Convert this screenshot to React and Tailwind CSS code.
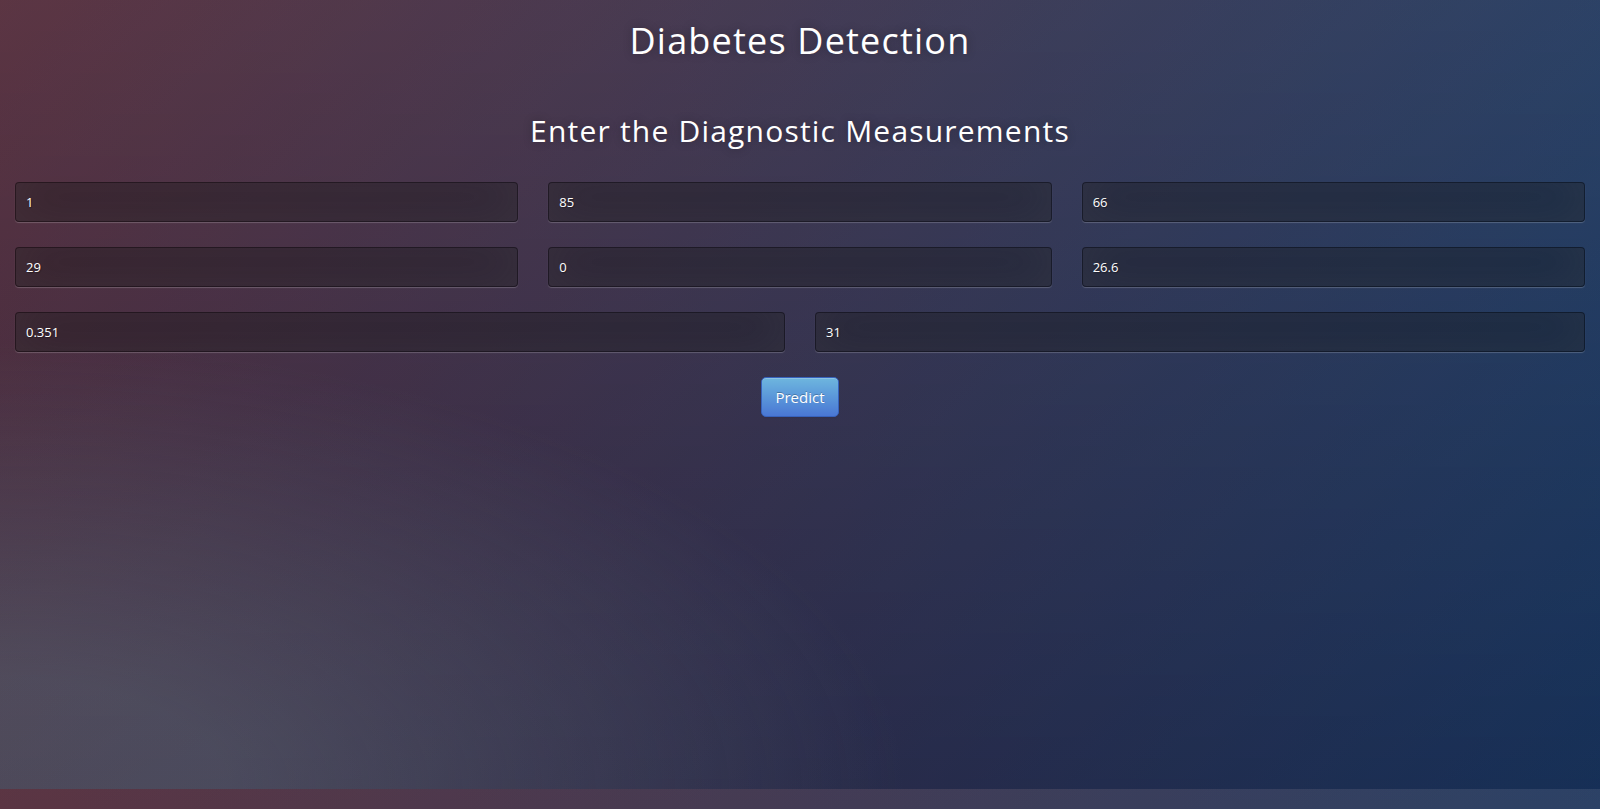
export default function App() {
  const rowA = ["1", "85", "66"];
  const rowB = ["29", "0", "26.6"];
  const rowC = ["0.351", "31"];

  const inputCls =
    "block w-full rounded-[4px] border border-black/30 bg-black/30 p-[10px] text-[13px] leading-[18px] text-white outline-none [text-shadow:1px_1px_1px_rgba(0,0,0,0.3)] shadow-[inset_0_-5px_45px_rgba(100,100,100,0.2),0_1px_1px_rgba(255,255,255,0.2)]";

  return (
    <div className="h-[809px] w-full bg-[#092756] bg-[radial-gradient(ellipse_farthest-corner_at_0%_100%,rgba(104,128,138,.4)_10%,rgba(138,114,76,0)_40%),linear-gradient(to_bottom,rgba(57,173,219,.25)_0%,rgba(42,60,87,.4)_100%),linear-gradient(135deg,#670d10_0%,#092756_100%)] bg-size-[100%_789px] font-['Open_Sans',sans-serif] text-white">
      <h1 className="pt-[21px] text-center text-[36px] leading-[40px] tracking-[1.2px] [text-shadow:0_0_10px_rgba(0,0,0,0.3)]">
        Diabetes Detection
      </h1>
      <h2 className="mt-[53px] text-center text-[30px] leading-[33px] tracking-[1.2px] [text-shadow:0_0_10px_rgba(0,0,0,0.3)]">
        Enter the Diagnostic Measurements
      </h2>

      <form className="mt-[35px] flex flex-col gap-[25px] px-[15px]">
        <div className="grid grid-cols-3 gap-x-[30px]">
          {rowA.map((v, i) => (
            <input key={i} className={inputCls} defaultValue={v} />
          ))}
        </div>
        <div className="grid grid-cols-3 gap-x-[30px]">
          {rowB.map((v, i) => (
            <input key={i} className={inputCls} defaultValue={v} />
          ))}
        </div>
        <div className="grid grid-cols-2 gap-x-[30px]">
          {rowC.map((v, i) => (
            <input key={i} className={inputCls} defaultValue={v} />
          ))}
        </div>
        <div className="flex justify-center">
          <button
            type="button"
            className="rounded-[5px] border border-[#3762bc] bg-[#4a77d4] bg-linear-to-b from-[#6eb6de] to-[#4a77d4] px-[13px] py-[9px] text-[15px] leading-[20px] text-white [text-shadow:0_-1px_0_rgba(0,0,0,0.25)] shadow-[inset_0_1px_0_rgba(255,255,255,.2),0_1px_2px_rgba(0,0,0,.05)]"
          >
            Predict
          </button>
        </div>
      </form>
    </div>
  );
}
